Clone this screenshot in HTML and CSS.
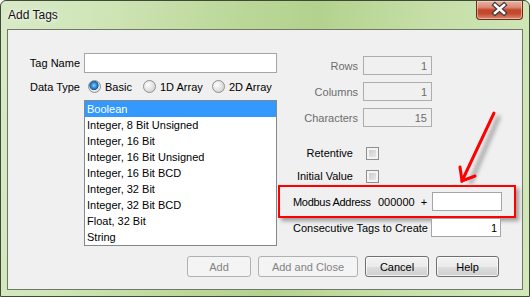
FILE: index.html
```html
<!DOCTYPE html>
<html lang="en">
<head>
    <meta charset="UTF-8">
    <title>Add Tags</title>
    <link rel="stylesheet" href="styles.css">
</head>
<body>

<div class="window">
    <div class="titlebar">
        <span class="title">Add Tags</span>
        <button class="close">
            <svg width="47" height="19" viewBox="0 0 47 19">
                <path d="M19 5 L28 13 M28 5 L19 13" stroke="#3b3b3b" stroke-width="5" stroke-linecap="square"/>
                <path d="M19 5 L28 13 M28 5 L19 13" stroke="#ffffff" stroke-width="2.6" stroke-linecap="square"/>
            </svg>
        </button>
    </div>

    <div class="client">
        <div class="panels">
            <div class="left">
                <span class="lbl">Tag Name</span>
                <input class="text" type="text">

                <span class="lbl">Data Type</span>
                <div class="radios">
                    <span class="opt opt-basic"><span class="radio on"></span>Basic</span>
                    <span class="opt opt-1d"><span class="radio"></span>1D Array</span>
                    <span class="opt"><span class="radio"></span>2D Array</span>
                </div>

                <ul class="types">
                    <li class="selected">Boolean</li>
                    <li>Integer, 8 Bit Unsigned</li>
                    <li>Integer, 16 Bit</li>
                    <li>Integer, 16 Bit Unsigned</li>
                    <li>Integer, 16 Bit BCD</li>
                    <li>Integer, 32 Bit</li>
                    <li>Integer, 32 Bit BCD</li>
                    <li>Float, 32 Bit</li>
                    <li>String</li>
                </ul>
            </div>

            <div class="right">
                <div class="dims">
                    <span class="lbl off">Rows</span>
                    <input class="text num" type="text" value="1" disabled>
                    <span class="lbl off">Columns</span>
                    <input class="text num" type="text" value="1" disabled>
                    <span class="lbl off">Characters</span>
                    <input class="text num" type="text" value="15" disabled>
                </div>

                <div class="checks">
                    <span class="lbl">Retentive</span>
                    <span class="check"></span>
                    <span class="lbl">Initial Value</span>
                    <span class="check"></span>
                </div>

                <div class="modbus">
                    <span class="modbus-lbl">Modbus Address</span>
                    <span class="modbus-base">000000</span>
                    <span class="plus">+</span>
                    <input class="text" type="text">
                </div>

                <div class="consec">
                    <span class="consec-lbl">Consecutive Tags to Create</span>
                    <input class="text count" type="text" value="1">
                </div>
            </div>
        </div>

        <div class="buttons">
            <button class="btn w64" disabled>Add</button>
            <button class="btn w100" disabled>Add and Close</button>
            <button class="btn w64">Cancel</button>
            <button class="btn w63">Help</button>
        </div>
    </div>

    <!-- callout arrow drawn over the dialog -->
    <svg class="arrow" width="530" height="297" viewBox="0 0 530 297">
        <defs>
            <filter id="soft" x="-20%" y="-20%" width="140%" height="140%">
                <feGaussianBlur stdDeviation="2"/>
            </filter>
        </defs>
        <g filter="url(#soft)" stroke="#8c8c8c" stroke-width="4" fill="none" opacity="0.8">
            <path d="M499 116 L470 184"/>
        </g>
        <g stroke="#ff0000" stroke-width="3" fill="none" stroke-linecap="round">
            <path d="M494 113 L462 181"/>
            <path d="M460 167 L462 181 L475 176"/>
        </g>
    </svg>
</div>

</body>
</html>
```

FILE: styles.css
```css
body {
    margin: 0;
    background: #ffffff;
    font-family: "Liberation Sans", Arial, sans-serif;
    font-size: 11px;
    color: #000000;
}

.window {
    position: relative;
    width: 530px;
    height: 297px;
    box-sizing: border-box;
    border: 1px solid #3e4a36;
    border-radius: 6px 6px 0 0;
    background: linear-gradient(100deg, #d9eac8 0%, #cfe5b6 18%, #bcd89a 40%, #b3d28e 55%, #c6dfa8 75%, #d2e8bb 100%);
}

.titlebar {
    height: 28px;
    display: flex;
    justify-content: space-between;
    padding: 0 6px 0 7px;
}

.title {
    padding-top: 7px;
    font-size: 12px;
    line-height: 15px;
    color: #111111;
    text-shadow: 0 0 6px rgba(255, 255, 255, 0.9), 0 0 3px rgba(255, 255, 255, 0.9);
}

.close {
    width: 47px;
    height: 19px;
    padding: 0;
    border: 1px solid #6b2a1c;
    border-top: none;
    border-radius: 0 0 4px 4px;
    background: linear-gradient(#eab2a3 0%, #dc8a75 35%, #c5462a 50%, #c34a2f 70%, #d98a70 100%);
    box-shadow: inset 0 0 0 1px rgba(255, 230, 220, 0.5);
}

.close svg {
    display: block;
    margin: -1px 0 0 -1px;
}

.client {
    margin: 0 6px;
    height: 261px;
    box-sizing: border-box;
    border: 1px solid #6f7868;
    background: #f0f0f0;
}

.panels {
    display: flex;
    height: 216px;
}

.left {
    display: grid;
    grid-template-columns: 72px 193px;
    grid-template-rows: 20px 15px 146px;
    column-gap: 4px;
    row-gap: 6px;
    padding-top: 23px;
    align-items: center;
}

.lbl {
    text-align: right;
    white-space: nowrap;
}

.off {
    color: #6d6d6d;
}

.text {
    box-sizing: border-box;
    height: 100%;
    margin: 0;
    padding: 0 3px;
    border: 1px solid #a5a5a5;
    background: #ffffff;
    font-family: inherit;
    font-size: 11px;
    color: #000000;
    outline: none;
}

.text:disabled {
    background: #f0f0f0;
    border-color: #adadad;
    color: #6d6d6d;
}

.num {
    text-align: right;
    padding-right: 4px;
}

.radios {
    display: flex;
    align-items: center;
    padding-left: 4px;
    height: 15px;
}

.opt {
    display: flex;
    align-items: center;
    gap: 4px;
    white-space: nowrap;
}

.opt-basic {
    width: 55px;
}

.opt-1d {
    width: 69px;
}

.radio {
    width: 11px;
    height: 11px;
    border: 1px solid #8e8f8f;
    border-radius: 50%;
    background: radial-gradient(circle at 35% 35%, #ffffff 0%, #e6e6e6 45%, #c9c9c9 100%);
}

.radio.on {
    background: radial-gradient(circle at 45% 40%, #8fd0ff 0%, #2b8ad6 30%, #1b5a96 48%, #e9e9e9 56%, #d0d0d0 100%);
}

.types {
    grid-column: 2;
    align-self: stretch;
    margin: 0;
    padding: 0;
    list-style: none;
    border: 1px solid #828790;
    background: #ffffff;
}

.types li {
    height: 16px;
    line-height: 16px;
    padding-left: 2px;
    white-space: nowrap;
}

.types .selected {
    background: #3399ff;
    color: #ffffff;
}

.right {
    width: 238px;
    margin-left: 1px;
    padding-top: 26px;
}

.dims {
    display: grid;
    grid-template-columns: 80px 69px;
    grid-auto-rows: 19px;
    column-gap: 5px;
    row-gap: 7px;
    align-items: center;
}

.checks {
    display: grid;
    grid-template-columns: 75px 13px;
    grid-auto-rows: 16px;
    column-gap: 13px;
    row-gap: 7px;
    align-items: center;
    margin-top: 18px;
}

.check {
    width: 11px;
    height: 11px;
    border: 1px solid #8e8f8f;
    background: linear-gradient(135deg, #c3c7cc, #eeeeee);
    box-shadow: inset 0 0 0 2px #f4f4f4;
}

.modbus {
    display: flex;
    align-items: center;
    height: 33px;
    box-sizing: border-box;
    margin-top: 1px;
    padding-left: 13px;
    border: 2px solid #ff0000;
    box-shadow: 3px 3px 4px rgba(0, 0, 0, 0.35);
}

.modbus-lbl {
    width: 85px;
    flex-shrink: 0;
    letter-spacing: -0.3px;
    white-space: nowrap;
}

.plus {
    margin: 0 5px 0 6px;
}

.modbus .text {
    width: 70px;
    height: 19px;
}

.consec {
    display: flex;
    height: 19px;
    align-items: center;
    padding-left: 15px;
}

.consec-lbl {
    width: 138px;
    white-space: nowrap;
}

.count {
    width: 70px;
    text-align: right;
}

.buttons {
    display: flex;
    justify-content: flex-end;
    gap: 7px;
    margin-top: 10px;
    padding-right: 23px;
}

.btn {
    height: 21px;
    padding: 0;
    border: 1px solid #707070;
    border-radius: 3px;
    background: linear-gradient(#f2f2f2 0%, #ebebeb 50%, #dddddd 51%, #cfcfcf 100%);
    box-shadow: inset 0 0 0 1px rgba(255, 255, 255, 0.7);
    font-family: inherit;
    font-size: 11px;
    color: #000000;
}

.btn:disabled {
    border-color: #adb2b5;
    background: #f4f4f4;
    box-shadow: none;
    color: #838383;
}

.w64 {
    width: 64px;
}

.w63 {
    width: 63px;
}

.w100 {
    width: 100px;
}

.arrow {
    position: absolute;
    left: -1px;
    top: -1px;
    pointer-events: none;
}
```
